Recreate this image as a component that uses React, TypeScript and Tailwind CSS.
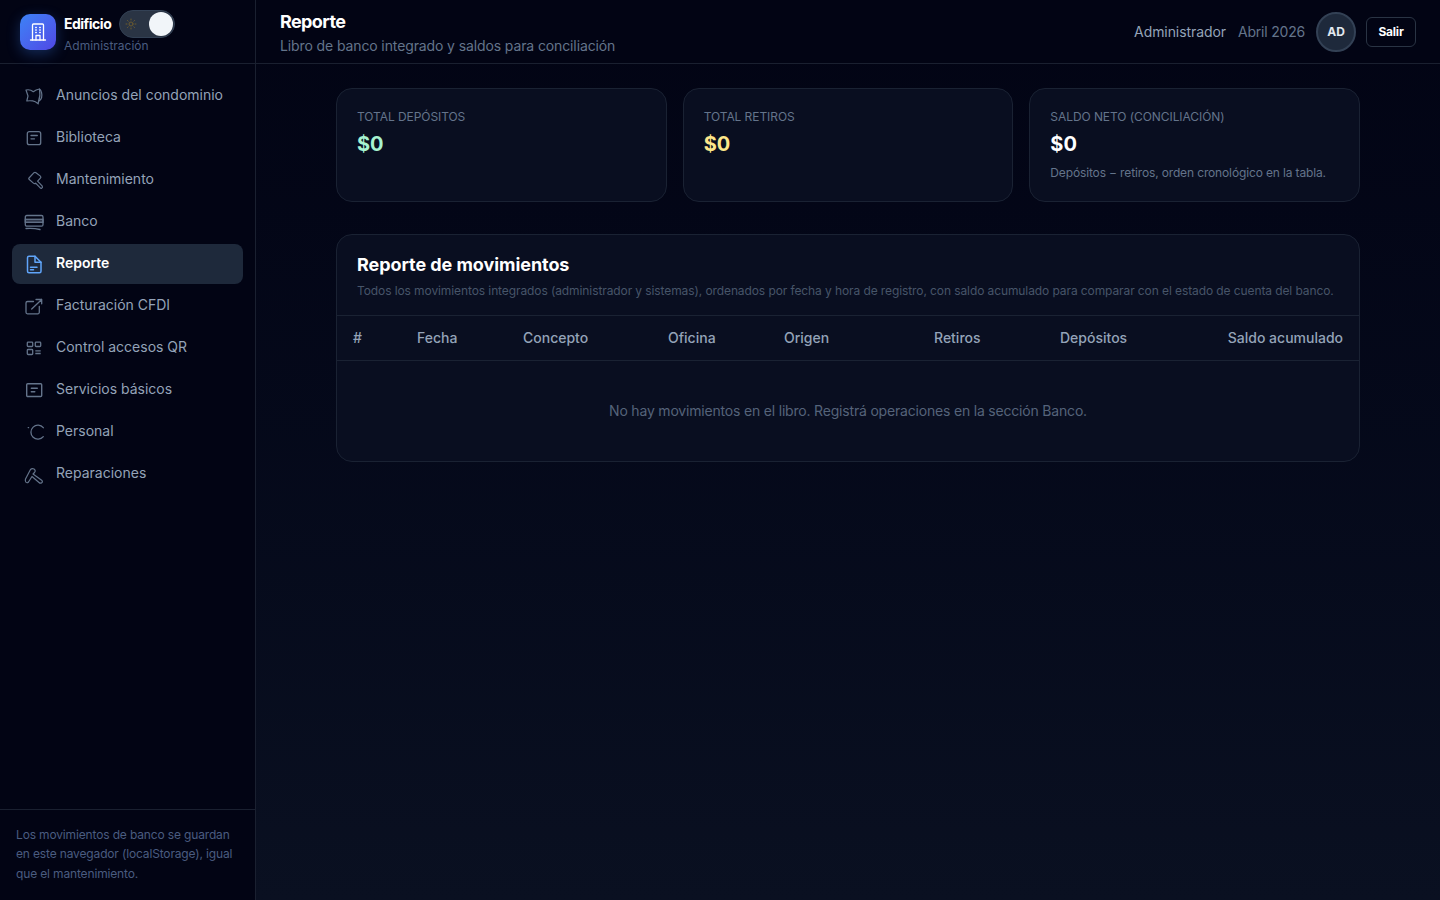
import { Sun } from "lucide-react";
import type { ReactNode } from "react";

const cls = "h-5 w-5 overflow-visible";
const NavIcons: Record<string, ReactNode> = {
  anuncios: (
    <svg viewBox="0 0 20 20" fill="none" stroke="currentColor" strokeWidth="1.2" strokeLinejoin="round" strokeLinecap="round" className={cls}>
      <path d="M2 4c2.800-.6 5.500.2 7.300 1.700C11 4.400 13 3.500 15.500 3c2 1.500 2.800 5.500 2.100 8.500-.5 2-1.500 3.300-3.100 4l-.3 2.300c-1.800-1.500-3.500-2.600-5.500-2.900-2-.2-4.200-.2-5.900.1L4 10 2 4Z" />
      <path d="M15.500 3c.8 4.300.5 8.500-1 12.500" />
    </svg>
  ),
  biblioteca: (
    <svg viewBox="0 0 20 20" fill="none" stroke="currentColor" strokeWidth="1.3" strokeLinecap="round" className={cls}>
      <rect x="3.300" y="3.700" width="13.400" height="13" rx="2" />
      <path d="M7 7.500h6.300M7 10.800h3.500" />
    </svg>
  ),
  mantenimiento: (
    <svg viewBox="0 0 20 20" fill="none" stroke="currentColor" strokeWidth="1.2" strokeLinejoin="round" className={cls}>
      <path d="M5 8 10 2.700q1-.8 2 0l4.400 3.400q1 1 0 2l-2.800 3 4.700 5.100q.5 1.500-.7 2.100-1 .2-1.600-.6l-4.400-4.500q-1 .9-2.200-.1L5 9.300q-.6-.6 0-1.300Z" />
    </svg>
  ),
  banco: (
    <svg viewBox="0 0 20 20" fill="none" stroke="currentColor" strokeWidth="1.3" strokeLinecap="round" className={cls}>
      <rect x="1.300" y="3.500" width="17.700" height="10.700" rx="1.500" />
      <rect x="1.300" y="7.300" width="17.700" height="3" fill="currentColor" fillOpacity="0.45" />
      <path d="M2 16.500c4.500-.4 9.500-.1 14 1" />
    </svg>
  ),
  reporte: (
    <svg viewBox="0 0 20 20" fill="none" stroke="currentColor" strokeWidth="1.500" strokeLinecap="round" strokeLinejoin="round" className={cls}>
      <path d="M5 2.200h6L17 8.200v9a1.500 1.500 0 0 1-1.500 1.500H5a1.500 1.500 0 0 1-1.500-1.500V3.700A1.500 1.500 0 0 1 5 2.200Z" />
      <path d="M11 2.200v6h6" />
      <path d="M6.500 13.200H13M6.500 15.700h3" />
    </svg>
  ),
  facturacion: (
    <svg viewBox="0 0 20 20" fill="none" stroke="currentColor" strokeWidth="1.300" strokeLinecap="round" strokeLinejoin="round" className={cls}>
      <path d="M9.500 5.500H3.500A1.500 1.500 0 0 0 2 7v9.300a1.500 1.500 0 0 0 1.500 1.500h10.300a1.500 1.500 0 0 0 1.500-1.500V10.500" />
      <path d="M7.700 13 17.700 3.500M12 3.500h5.700v4.300" />
    </svg>
  ),
  control: (
    <svg viewBox="0 0 20 20" fill="none" stroke="currentColor" strokeWidth="1.300" className={cls}>
      <rect x="3.300" y="4.200" width="5.400" height="4.300" rx=".8" />
      <rect x="11.300" y="4.200" width="5.400" height="4.300" rx=".8" />
      <rect x="3.300" y="11.500" width="5.400" height="5" rx=".8" />
      <path d="M11.300 12.800h5.400M11.300 15.500h5.400" />
    </svg>
  ),
  servicios: (
    <svg viewBox="0 0 20 20" fill="none" stroke="currentColor" strokeWidth="1.400" strokeLinecap="round" className={cls}>
      <rect x="2.700" y="3.800" width="15" height="12.700" rx="1" />
      <path d="M7.300 8.200h6M7.300 11.800h3.500" />
    </svg>
  ),
  personal: (
    <svg viewBox="0 0 20 20" fill="none" stroke="currentColor" strokeWidth="1.300" strokeLinecap="round" className={cls}>
      <path d="M19.300 5.700A7 7 0 1 0 19.300 14.700" />
      <path d="M4.200 5.600h.4" />
    </svg>
  ),
  reparaciones: (
    <svg viewBox="0 0 20 20" fill="none" stroke="currentColor" strokeWidth="1.200" strokeLinejoin="round" strokeLinecap="round" className={cls}>
      <path d="M1.500 15 6.500 5.500q1.500-1.500 3.500-.5 2 1.500.5 3.500L9 10l9 6.500q1 1.500-.5 2.500-1.500.5-2.500-.5l-7-6-3.500 5.500q-1.500 1.500-2.700 0-.8-1.500-.3-3Z" />
    </svg>
  ),
};

const navItems = [
  { key: "anuncios", label: "Anuncios del condominio" },
  { key: "biblioteca", label: "Biblioteca" },
  { key: "mantenimiento", label: "Mantenimiento" },
  { key: "banco", label: "Banco" },
  { key: "reporte", label: "Reporte", active: true },
  { key: "facturacion", label: "Facturación CFDI" },
  { key: "control", label: "Control accesos QR" },
  { key: "servicios", label: "Servicios básicos" },
  { key: "personal", label: "Personal" },
  { key: "reparaciones", label: "Reparaciones" },
];

function StatCard({ label, value, color, note }: { label: string; value: string; color: string; note?: string }) {
  return (
    <div className="h-[114px] rounded-2xl border border-[#1a2233] bg-[#090e20] px-5 pt-5">
      <p className="text-xs leading-4 tracking-[-0.07px] text-[#64748b]">{label}</p>
      <p className={`mt-[5px] text-xl leading-7 font-bold ${color}`}>{value}</p>
      {note && <p className="mt-[7px] text-xs leading-4 tracking-[-0.14px] text-[#64748b]">{note}</p>}
    </div>
  );
}

export default function App() {
  return (
    <div className="flex min-h-screen h-[900px] overflow-hidden bg-linear-to-b from-[#020414] to-[#0a1021] font-['Inter','Noto_Sans',sans-serif] text-[#94a3b8]">
      {/* Sidebar */}
      <aside className="flex w-[256px] shrink-0 flex-col border-r border-[#1a2030] bg-[#020414]">
        <div className="flex h-16 shrink-0 items-start gap-2 border-b border-[#1a2030] pl-5 pt-[10px]">
          <div className="mt-1 flex h-9 w-9 items-center justify-center rounded-[10px] bg-linear-to-br from-[#3b82f6] to-[#4f46e5] text-white shadow-[0_4px_14px_rgba(59,130,246,0.3)]">
            <svg viewBox="0 0 20 20" fill="none" stroke="currentColor" strokeWidth="1.300" strokeLinecap="round" strokeLinejoin="round" className="h-5 w-5">
              <path d="M4.500 18V3a1 1 0 0 1 1-1h9a1 1 0 0 1 1 1v15" />
              <path d="M2.500 18h15" />
              <path d="M8 18v-4.500h4V18" />
              <path d="M7.700 5.500h.6M11.700 5.500h.6M7.700 8h.6M11.700 8h.6M7.700 10.500h.6M11.700 10.500h.6" />
            </svg>
          </div>
          <div className="min-w-0">
            <div className="flex items-center gap-2">
              <span className="text-sm font-bold leading-5 tracking-[-0.5px] text-white">Edificio</span>
              <span className="flex h-7 w-14 items-center justify-between rounded-full border border-[#334155] bg-[#2a3444] pl-[5px] pr-px">
                <Sun className="h-3 w-3 text-[#6b5a2e]" />
                <span className="h-6 w-6 rounded-full bg-[#f1f5f9]" />
              </span>
            </div>
            <p className="text-xs leading-4 text-[#4a5c80]">Administración</p>
          </div>
        </div>
        <nav className="flex flex-1 flex-col gap-0.5 px-3 pt-3">
          {navItems.map((item) => (
            <a
              key={item.key}
              className={`flex h-10 items-center gap-3 rounded-lg px-3 text-sm ${
                item.active ? "bg-[#1e293b] font-semibold text-white" : "text-[#94a3b8]"
              }`}
            >
              <span className={`flex w-5 justify-center ${item.active ? "text-[#60a5fa]" : "text-[#64748b]"}`}>
                {NavIcons[item.key]}
              </span>
              <span className="pb-0.5">{item.label}</span>
            </a>
          ))}
        </nav>
        <div className="border-t border-[#1a2030] px-4 pb-[17px] pt-[15px]">
          <p className="text-xs leading-[19.500px] tracking-[-0.15px] text-[#4a5c80]">
            Los movimientos de banco se guardan en este navegador (localStorage), igual que el mantenimiento.
          </p>
        </div>
      </aside>

      {/* Main */}
      <div className="flex min-w-0 flex-1 flex-col">
        <header className="flex h-16 shrink-0 items-center justify-between border-b border-[#1a2030] bg-[#020414] pl-6 pr-6">
          <div>
            <h1 className="text-lg font-bold leading-7 tracking-[-0.6px] text-white">Reporte</h1>
            <p className="text-sm leading-5 tracking-[-0.115px] text-[#64748b]">Libro de banco integrado y saldos para conciliación</p>
          </div>
          <div className="flex items-center gap-3">
            <span className="text-sm tracking-[-0.08px] text-[#94a3b8]">Administrador</span>
            <span className="-mr-px text-sm tracking-[-0.2px] text-[#64748b]">Abril 2026</span>
            <span className="flex h-10 w-10 items-center justify-center rounded-full border-2 border-[#334155] bg-[#1e293b] text-xs font-bold text-[#e2e8f0]">
              AD
            </span>
            <button className="-ml-0.5 h-[30px] w-[50px] rounded-md border border-[#2a3444] text-xs font-bold tracking-[-0.2px] text-white">Salir</button>
          </div>
        </header>

        <main className="mx-auto w-[1024px] pt-6">
          <div className="grid grid-cols-3 gap-4">
            <StatCard label="TOTAL DEPÓSITOS" value="$0" color="text-[#a7f3d0]" />
            <StatCard label="TOTAL RETIROS" value="$0" color="text-[#fde68a]" />
            <StatCard
              label="SALDO NETO (CONCILIACIÓN)"
              value="$0"
              color="text-white"
              note="Depósitos − retiros, orden cronológico en la tabla."
            />
          </div>

          <section className="mt-8 rounded-2xl border border-[#1a2233] bg-[#090e20]">
            <div className="h-[81px] border-b border-[#1a2233] px-5 pt-4">
              <h2 className="text-lg font-bold leading-7 tracking-[-0.06px] text-white">Reporte de movimientos</h2>
              <p className="mt-1 whitespace-nowrap text-xs leading-4 tracking-[-0.095px] text-[#475569]">
                Todos los movimientos integrados (administrador y sistemas), ordenados por fecha y hora de registro, con saldo acumulado para comparar con el estado de cuenta del banco.
              </p>
            </div>
            <table className="w-full text-sm">
              <thead>
                <tr className="h-[44px] border-b border-[#1a2233] text-[#94a3b8]">
                  <th className="w-[64px] pl-4 text-left font-medium">#</th>
                  <th className="w-[106px] pl-4 text-left font-medium">Fecha</th>
                  <th className="w-[145px] pl-4 text-left font-medium">Concepto</th>
                  <th className="w-[116px] pl-4 text-left font-medium">Oficina</th>
                  <th className="w-[150px] pl-4 text-left font-medium">Origen</th>
                  <th className="w-[125px] pl-4 text-left font-medium">Retiros</th>
                  <th className="w-[125px] pl-[17px] text-left font-medium">Depósitos</th>
                  <th className="pr-4 text-right font-medium">Saldo acumulado</th>
                </tr>
              </thead>
              <tbody>
                <tr>
                  <td colSpan={8} className="h-[101px] text-center tracking-[-0.19px] text-[#55637a]">
                    No hay movimientos en el libro. Registrá operaciones en la sección Banco.
                  </td>
                </tr>
              </tbody>
            </table>
          </section>
        </main>
      </div>
    </div>
  );
}
